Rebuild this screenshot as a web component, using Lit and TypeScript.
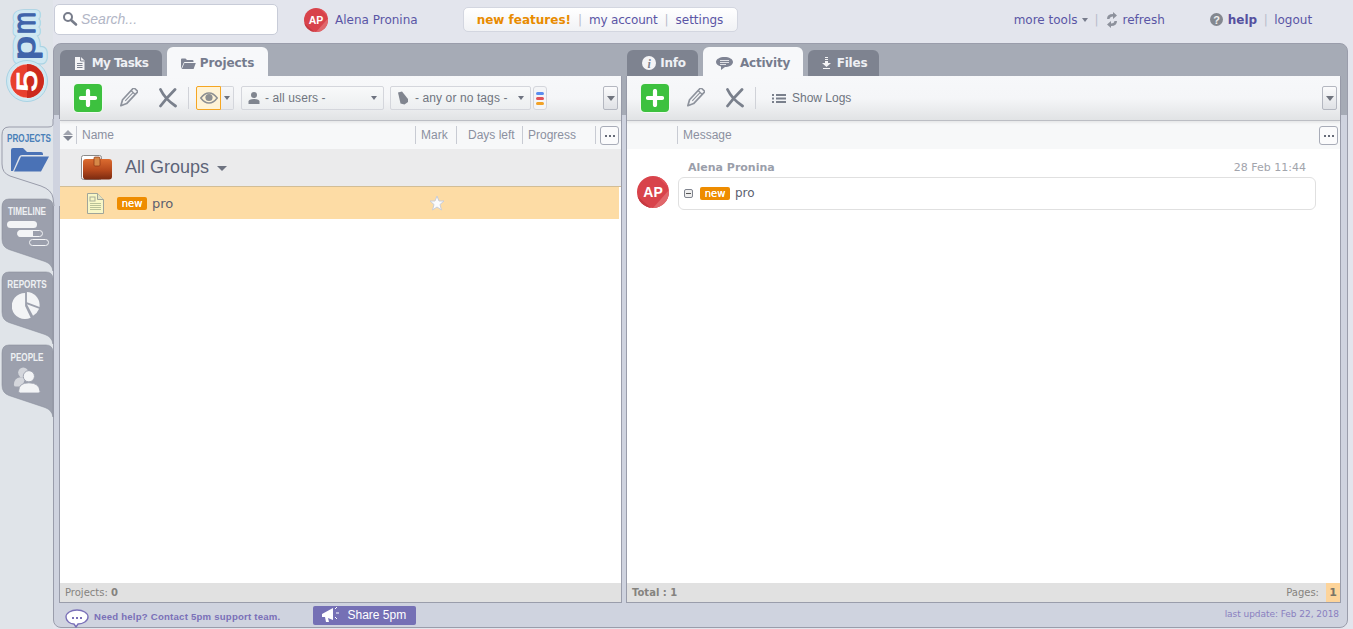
import { LitElement, html, css, svg } from "lit";
import { customElement } from "lit/decorators.js";

const doc = html`<svg width="11" height="13" viewBox="0 0 11 13"><path d="M1 0h6l3.5 3.5V13H1z" fill="#f4f4f6"/><path d="M6.6 0v4h4" fill="none" stroke="#7e8390"/><path d="M3 6.5h5.5M3 8.5h5.5M3 10.5h5.5" stroke="#7e8390"/></svg>`;
const openFolder = (c: string, w = 15, h = 11) => html`<svg width=${w} height=${h} viewBox="0 0 15 11"><path d="M0 11V1.5Q0 .5 1 .5h3.5L6 2h5.5q1 0 1 1v1H4Q3 4 2.6 5z" fill=${c}/><path d="M3.4 5h11.4L12.6 11H.8z" fill=${c}/></svg>`;
const pencil = html`<svg class="pencil" width="20" height="20" viewBox="0 0 20 20"><g transform="rotate(43 10 10)" fill="none" stroke="#8d929c" stroke-width="1.7" stroke-linejoin="round"><path d="M7.2-1.5h5.6V15L10 20.5 7.2 15z"/><path d="M7.2 2.5h5.6" stroke-width="1.4"/><path d="M10 3v11" stroke-width="1.1"/></g></svg>`;
const cross = html`<svg class="cross" width="20" height="20" viewBox="0 0 20 20"><path d="M2.500 1.500Q7 11 17.500 18M17 1.500Q9 9.500 2.500 18" fill="none" stroke="#7a808c" stroke-width="2.800" stroke-linecap="round"/></svg>`;
const plus = html`<div class="plus"><svg width="18" height="18" viewBox="0 0 18 18"><path d="M9 2v14M2 9h14" stroke="#fff" stroke-width="4.2" stroke-linecap="round"/></svg></div>`;
const caret = html`<span class="caret"></span>`;
const avatar = (s: number, fs: number) => html`<svg width=${s} height=${s} viewBox="0 0 32 32" class="avatar"><defs><clipPath id="c"><circle cx="16" cy="16" r="16"/></clipPath></defs><g clip-path="url(#c)"><rect width="32" height="32" fill="#d8434b"/><path d="M16 32L32 14V32z" fill="#e0676b"/><path d="M0 20L14 32H0z" fill="#c63840"/><path d="M20 0H32V12z" fill="#e2555a"/></g><text x="16" y="21" text-anchor="middle" font-family="'Liberation Sans',sans-serif" font-weight="700" font-size=${fs} fill="#fff">AP</text></svg>`;
const more = html`<div class="more"><i></i><i></i><i></i></div>`;
const collapse = html`<div class="collapse"><span></span></div>`;
const badge = html`<span class="badge">new</span>`;

@customElement("app-root")
export class AppRoot extends LitElement {
  static styles = css`
    :host { display: block; height: 629px; overflow: hidden; font-family: "DejaVu Sans", Verdana, sans-serif; background: #e3e5ed; }
    * { box-sizing: border-box; }
    .app { display: flex; height: 629px; }
    .side { width: 53px; flex: none; background: #e0e4e9; position: relative; z-index: 2; display: flex; flex-direction: column; }
    .logo { display: block; height: 126px; flex: none; }
    .stab { display: block; position: relative; width: 60px; height: 73px; flex: none; }
    .stab > svg.shape { position: absolute; left: 0; top: 0; }
    .stab > span { position: relative; display: block; width: 54px; text-align: center; font: 700 11px/12px "Liberation Sans", sans-serif; transform: scaleX(.74); color: #eef0f3; padding-top: 6px; }
    .stab.on > span { color: #4a80b8; padding-top: 6px; }
    .stab > svg.ic { position: relative; display: block; }
    .ic-folder { margin: 3px 0 0 11px; }
    .ic-time { margin: 3px 0 0 6px; }
    .ic-pie { margin: 2px 0 0 12px; }
    .ic-people { margin: 3px 0 0 13px; }
    .main { flex: 1; min-width: 0; display: flex; flex-direction: column; padding-right: 5px; }
    .top { height: 43px; flex: none; display: flex; align-items: center; font-size: 12px; color: #5a55a5; }
    .search { width: 224px; height: 31px; margin: -4px 0 0 1px; background: #fff; border: 1px solid #c8ccd8; border-radius: 5px; display: flex; align-items: center; padding: 0 0 1px 7px; gap: 3px; font: italic 14px "Liberation Sans", sans-serif; color: #b2b6c6; }
    .me { display: flex; align-items: center; gap: 7px; margin: -3px 0 0 26px; }
    .avatar { display: block; flex: none; }
    .pill { margin: -4px 0 0 45px; width: 275px; height: 25px; display: flex; align-items: center; padding-left: 13px; background: linear-gradient(#fff, #f1f2f5); border: 1px solid #d3d6e0; border-radius: 5px; }
    .pill b { color: #e88b00; }
    .pill .acc { letter-spacing: -.2px; }
    .bar { color: #b8bccb; margin: 0 7px; }
    .tools { margin: -4px 0 0 276px; display: flex; align-items: center; }
    .tools .dn { width: 0; height: 0; border: 3.5px solid transparent; border-top: 4px solid #777c8c; border-bottom: 0; margin-left: 4px; }
    .tools .bar { margin: 0 5px 0 7px; }
    .tools svg { margin-right: 5px; margin-left: 2px; }
    .help { margin: -4px 0 0 45px; display: flex; align-items: center; }
    .help svg { margin-right: 5px; }
    .help b { color: #55509f; }
    .help .bar { margin: 0 6.500px; }
    .panel { flex: 1; min-height: 0; margin-bottom: 1px; border: 1px solid #9a9dab; border-radius: 8px; background: linear-gradient(#a6abb6 0 71px, #cfd3df 71px); display: flex; flex-direction: column; padding: 0 6px 0 5px; }
    .panes { flex: 1; min-height: 0; display: flex; gap: 4px; }
    .pane { display: flex; flex-direction: column; min-width: 0; }
    .pane.l { width: 563px; flex: none; }
    .pane.r { flex: 1; }
    .tabs { height: 32px; flex: none; display: flex; align-items: flex-end; gap: 5px; padding-left: 1px; position: relative; }
    .tab { height: 26px; border-radius: 6px 6px 0 0; background: #7e8390; color: #eef0f4; display: flex; align-items: center; justify-content: center; gap: 6px; font-weight: 700; font-size: 12px; letter-spacing: -.2px; }
    .tab.on { height: 30px; background: #f7f8fa; color: #767c8e; margin-bottom: -1px; position: relative; z-index: 1; padding-top: 2px; }
    .t-mytasks { width: 102px; gap: 7px; letter-spacing: -.55px; } .t-projects { width: 101px; gap: 4px; letter-spacing: -.1px; }
    .t-info { width: 71px; padding-left: 3px; gap: 4px; } .t-activity { width: 100px; gap: 7px; } .t-files { width: 71px; padding-left: 2px; }
    .body { flex: 1; min-height: 0; display: flex; flex-direction: column; background: #fff; border: 1px solid #9a9dab; border-top: 0; }
    .bar-t { height: 45px; flex: none; display: flex; align-items: center; padding-left: 14px; background: linear-gradient(#f7f8fa 0, #f5f6f8 50%, #e1e3e5 100%); border-bottom: 1px solid #bcbec4; box-shadow: 0 2px 2px rgba(0,0,0,.06); position: relative; }
    .plus { width: 28px; height: 28px; border-radius: 4px; background: #3dc13f; display: flex; align-items: center; justify-content: center; box-shadow: 0 0 0 1px #f2fbf2; flex: none; }
    .pencil { margin-left: 16px; flex: none; } .cross { margin-left: 20px; flex: none; }
    .sep { width: 1px; height: 22px; background: #d0d2d8; margin-left: 10px; flex: none; }
    .eye { display: flex; height: 24px; margin-left: 7px; flex: none; }
    .eye .a { width: 25px; border: 1px solid #f5a623; background: #fff3d6; display: flex; align-items: center; justify-content: center; border-radius: 2px 0 0 2px; }
    .eye .b { width: 13px; border: 1px solid #d4d6dc; border-left: 0; background: linear-gradient(#f6f7f9, #e9eaed); display: flex; align-items: center; justify-content: center; border-radius: 0 2px 2px 0; }
    .caret { display: inline-block; width: 0; height: 0; border: 3.5px solid transparent; border-top: 4px solid #6e7380; border-bottom: 0; flex: none; }
    .sel { height: 24px; flex: none; border: 1px solid #d4d6dc; border-radius: 2px; background: linear-gradient(#f8f9fa, #eceef0); display: flex; align-items: center; font: 12px "Liberation Sans", sans-serif; color: #70757f; letter-spacing: .1px; }
    .sel .caret { margin-left: auto; margin-right: 6px; }
    .s-users { width: 143px; margin-left: 7px; padding-left: 6px; gap: 5px; }
    .s-tags { width: 141px; margin-left: 6px; padding-left: 6px; gap: 6px; }
    .chip { width: 14px; height: 24px; margin-left: 2px; flex: none; border: 1px solid #d4d6dc; border-radius: 3px; background: #f4f5f7; display: flex; flex-direction: column; justify-content: center; gap: 2px; padding: 0 2px; }
    .chip i { display: block; height: 3px; border-radius: 2px; }
    .chip .c1 { background: #5b8def; } .chip .c2 { background: #e0525a; } .chip .c3 { background: #f2a227; }
    .collapse { margin-left: auto; margin-right: 3px; width: 15px; height: 24px; flex: none; border: 1px solid #b4b7c0; border-radius: 2px; background: linear-gradient(#fbfbfc, #dfe1e5); display: flex; align-items: center; justify-content: center; }
    .collapse span { width: 0; height: 0; border: 4.5px solid transparent; border-top: 5px solid #70747e; border-bottom: 0; }
    .logs { display: flex; align-items: center; gap: 6px; margin-left: 16px; font: 12px "Liberation Sans", sans-serif; color: #6e7480; }
    .cols { height: 28px; flex: none; display: flex; align-items: center; background: #f7f8f9; font: 12px "Liberation Sans", sans-serif; color: #8b90a0; }
    .cols > div { height: 18px; line-height: 18px; border-left: 1px solid #c8cbd3; padding-left: 5px; flex: none; }
    .cols > .sort { border: 0; padding: 0 0 0 3px; width: 16px; display: flex; flex-direction: column; justify-content: center; gap: 1px; }
    .sort i { display: block; width: 0; height: 0; border: 5.5px solid transparent; border-bottom: 0; border-top: 5px solid #7e8390; }
    .sort i:first-child { border-top: 0; border-bottom: 5px solid #a0a4ae; }
    .cols > .slot { border: 0; padding: 0; width: 50px; }
    .cols > .grow { flex: 1; min-width: 0; }
    .c-mark { width: 41px; } .c-days { width: 66px; padding-left: 11px !important; } .c-prog { width: 73px; }
    .c-end { width: 26px; padding-left: 4px !important; position: relative; }
    .c-end2 { border: 0 !important; width: 21px; padding-left: 0 !important; }
    .more { width: 19px; height: 19px; border: 1px solid #a8acb8; border-radius: 3px; background: #fbfbfc; display: flex; align-items: center; justify-content: center; gap: 2px; }
    .more i { width: 2px; height: 2px; background: #666b78; display: block; }
    .content { flex: 1; min-height: 0; background: #fff; }
    .groups { height: 38px; background: #ebebec; border-bottom: 1px solid #d2bd95; display: flex; align-items: center; padding-left: 21px; font: 18px "Liberation Sans", sans-serif; color: #5d6478; }
    .groups svg { margin-right: 13px; }
    .groups .caret { border-width: 5px 5px 0; border-top-color: #6e7380; margin-left: 8px; margin-top: 2px; border-bottom: 0; }
    .row { height: 32px; margin-right: 2px; background: #fddca5; display: flex; align-items: center; padding-left: 27px; font-size: 13px; color: #5c6070; position: relative; }
    .row svg.d { margin-right: 13px; }
    .row svg.star { margin-left: 256px; margin-top: -1px; }
    .badge { display: inline-block; width: 30px; height: 13px; border-radius: 2px; background: #ee8c00; color: #fff; font: 400 10px/13px "DejaVu Sans", sans-serif; text-shadow: 0 0 .5px #fff; text-align: center; margin-right: 5px; }
    .foot { height: 19px; flex: none; background: #e1e1e1; display: flex; align-items: center; padding: 0 0 0 5px; font-size: 10px; color: #85837f; }
    .foot b { font-weight: 700; }
    .foot .pg { margin-left: auto; display: flex; align-items: center; height: 19px; }
    .foot .n { width: 14px; height: 19px; margin-left: 7px; background: #fdd49a; text-align: center; line-height: 19px; font-weight: 700; font-size: 11px; color: #7a7468; }
    .msg { padding: 12px 24px 0 10px; }
    .msg .h { display: flex; justify-content: space-between; padding: 0 10px 0 51px; font-size: 11px; line-height: 14px; color: #9a9eaa; }
    .msg .h span { color: #a2a4ac; }
    .msg .b { display: flex; align-items: flex-start; gap: 9px; margin-top: 2px; }
    .msg .b .avatar { margin-top: -1px; }
    .msg .box { flex: 1; height: 33px; border: 1px solid #e0e0e0; border-radius: 6px; display: flex; align-items: center; padding-left: 5px; font-size: 12px; color: #5c6070; padding-bottom: 1px; }
    .msg .mini { width: 9px; height: 9px; border: 1px solid #80848e; border-radius: 2px; background: #eee; position: relative; margin-right: 7px; flex: none; }
    .msg .mini::after { content: ""; position: absolute; left: 1px; right: 1px; top: 3px; height: 1px; background: #555; }
    .pfoot { height: 24px; flex: none; display: flex; align-items: center; padding-left: 6px; font: 700 9.6px "Liberation Sans", sans-serif; color: #7a70b8; letter-spacing: .22px; }
    .pfoot > svg { margin: 6px 5px 0 0; flex: none; }
    .pfoot .need { margin-top: 3px; }
    .share { margin-left: 32px; width: 103px; height: 19px; border-radius: 2px; background: #7570b5; color: #fff; font: 12px "Liberation Sans", sans-serif; display: flex; align-items: center; padding-left: 9px; gap: 6px; letter-spacing: 0; }
    .last { margin-left: auto; margin-right: 2px; font: 9px "DejaVu Sans", sans-serif; color: #8a80c0; font-weight: 400; letter-spacing: -.05px; padding-bottom: 3px; }
  `;

  private tabShape(on: boolean) {
    const d = on
      ? "M53 -7 V-2 Q53 1 48 1 H9 Q2 1 2 9 V38 Q2 47 10 50 L41 60 Q52 64 53 72 L54 80"
      : "M2 8 Q2 0 9 0 H46 Q52 0 53 6 V72 Q52 65 45 62.500 L9 50.500 Q2 48 2 40 Z";
    return html`<svg class="shape" width="60" height="82" viewBox="0 0 60 82" overflow="visible">
      ${on
        ? svg`<path d="M53 -7 V-2 Q53 1 48 1 H9 Q2 1 2 9 V38 Q2 47 10 50 L41 60 Q52 64 53 72 L54 80 H60 V-7 Z" fill="#cfd3df"/><path d=${d + " H53 V-7 Z"} fill="#e0e4e9"/><path d=${d} fill="none" stroke="#9a9dab"/>`
        : svg`<path d=${d} fill="#9ca0ad" stroke="#8a8e9c" stroke-width=".6"/>`}
    </svg>`;
  }

  render() {
    return html`<div class="app">
      <div class="side">
        <svg class="logo" width="53" height="126" viewBox="0 0 53 126">
          <g font-family="'Liberation Sans',sans-serif" font-weight="400" font-size="32" stroke-linejoin="round">
            <text transform="translate(35 60) rotate(-90)" textLength="24" lengthAdjust="spacingAndGlyphs" fill="#cfe8f2" stroke="#a9d3e4" stroke-width="11">p</text>
            <text transform="translate(35 34) rotate(-90)" textLength="22" lengthAdjust="spacingAndGlyphs" fill="#cfe8f2" stroke="#a9d3e4" stroke-width="11">m</text>
            <text transform="translate(35 60) rotate(-90)" textLength="24" lengthAdjust="spacingAndGlyphs" fill="#cfe8f2" stroke="#cfe8f2" stroke-width="9">p</text>
            <text transform="translate(35 34) rotate(-90)" textLength="22" lengthAdjust="spacingAndGlyphs" fill="#cfe8f2" stroke="#cfe8f2" stroke-width="9">m</text>
            <text transform="translate(35 60) rotate(-90)" textLength="24" lengthAdjust="spacingAndGlyphs" fill="#3f64aa" stroke="#3f64aa" stroke-width="1.200">p</text>
            <text transform="translate(35 34) rotate(-90)" textLength="22" lengthAdjust="spacingAndGlyphs" fill="#3f64aa" stroke="#3f64aa" stroke-width="1.200">m</text>
          </g>
          <circle cx="27" cy="81" r="20.500" fill="#cfe8f2" stroke="#a9d3e4"/>
          <circle cx="27" cy="81" r="17" fill="#e8402f" stroke="#fff" stroke-width=".6"/>
          <path d="M27 64a17 17 0 0 1 0 34z" fill="#cc2a1e"/>
          <text transform="translate(37 92) rotate(-90)" textLength="22" lengthAdjust="spacingAndGlyphs" font-family="'Liberation Sans',sans-serif" font-weight="400" font-size="30" fill="#fff" stroke="#fff" stroke-width=".8">5</text>
        </svg>
        <div class="stab on">${this.tabShape(true)}<span>PROJECTS</span>
          <svg class="ic ic-folder" width="38" height="25" viewBox="0 0 38 25"><path d="M0 24V3Q0 1 2 1H12L16 5H30Q32 5 32 7V8H11Q9 8 8 10L2 24z" fill="#4a72b6"/><path d="M10 9.500H38L30 24.500H3z" fill="#4a72b6"/></svg>
        </div>
        <div class="stab">${this.tabShape(false)}<span>TIMELINE</span>
          <svg class="ic ic-time" width="46" height="27" viewBox="0 0 46 27"><rect x="1" y="1" width="30" height="7" rx="3.500" fill="#f3f4f6"/><rect x="11.500" y="10.500" width="25" height="6" rx="3" fill="#9ca0ad" stroke="#f3f4f6"/><path d="M15 10h12v7H15a3.500 3.500 0 0 1 0-7z" fill="#f3f4f6"/><rect x="23.500" y="19.500" width="19" height="6" rx="3" fill="none" stroke="#f3f4f6"/></svg>
        </div>
        <div class="stab">${this.tabShape(false)}<span>REPORTS</span>
          <svg class="ic ic-pie" width="29" height="28" viewBox="0 0 30 30"><path d="M13.500 1A14 14 0 1 0 19.500 27.500L13.500 15z" fill="#f3f4f6"/><path d="M15.500 0A14 14 0 0 1 29 13.500V16L15.500 11z" fill="#f3f4f6"/><path d="M15.500 13L28.500 18Q26.500 23 22 25.500z" fill="#f3f4f6"/></svg>
        </div>
        <div class="stab">${this.tabShape(false)}<span>PEOPLE</span>
          <svg class="ic ic-people" width="28" height="28" viewBox="0 0 30 30"><circle cx="11" cy="7" r="5.500" fill="#d4d6dc"/><path d="M1 20q0-7 7-8l5 1-3 9H3q-2 0-2-2z" fill="#d4d6dc"/><circle cx="17" cy="11" r="6" fill="#f3f4f6" stroke="#9ca0ad"/><path d="M6 27q0-9 11-9t12 9q0 2-2 2H8q-2 0-2-2z" fill="#f3f4f6" stroke="#9ca0ad"/></svg>
        </div>
      </div>
      <div class="main">
        <div class="top">
          <div class="search"><svg width="16" height="16" viewBox="0 0 16 16"><circle cx="6" cy="6" r="4" fill="none" stroke="#777c8a" stroke-width="2"/><path d="M9 9l5 4.500" stroke="#777c8a" stroke-width="2.600" stroke-linecap="round"/></svg>Search...</div>
          <div class="me">${avatar(24, 14)}<span>Alena Pronina</span></div>
          <div class="pill"><b>new features!</b><span class="bar">|</span><span class="acc">my account</span><span class="bar">|</span><span>settings</span></div>
          <div class="tools"><span>more tools</span><span class="dn"></span><span class="bar">|</span>
            <svg width="12" height="16" viewBox="0 0 12 16"><path d="M1 7Q1 2 7 2V0l4 3.500L7 7V4.500Q4 4.500 3.500 7zM11 9q0 5-6 5v2l-4-3.500L5 9v2.500q3 0 3.500-2.500z" fill="#8d919c"/></svg><span>refresh</span></div>
          <div class="help"><svg width="13" height="13" viewBox="0 0 13 13"><circle cx="6.500" cy="6.500" r="6.500" fill="#83878f"/><text x="6.500" y="10.500" text-anchor="middle" font-family="'Liberation Sans',sans-serif" font-weight="700" font-size="11" fill="#eee">?</text></svg><b>help</b><span class="bar">|</span><span>logout</span></div>
        </div>
        <div class="panel">
          <div class="panes">
            <div class="pane l">
              <div class="tabs">
                <div class="tab t-mytasks">${doc}<span>My Tasks</span></div>
                <div class="tab on t-projects">${openFolder("#7f8494")}<span>Projects</span></div>
              </div>
              <div class="body">
                <div class="bar-t">${plus}${pencil}${cross}<span class="sep"></span>
                  <div class="eye"><div class="a"><svg width="18" height="12" viewBox="0 0 18 12"><path d="M.8 6Q4.500 1 9 1t8.200 5Q13.500 11 9 11T.8 6z" fill="none" stroke="#8d8f92" stroke-width="1.500"/><circle cx="9" cy="5.500" r="3.600" fill="#8d8f92"/></svg></div><div class="b">${caret}</div></div>
                  <div class="sel s-users"><svg width="12" height="12" viewBox="0 0 12 12"><circle cx="6" cy="3" r="3" fill="#80858f"/><path d="M.5 12V9.500Q.5 7 6 7t5.500 2.500V12z" fill="#80858f"/></svg><span>- all users -</span>${caret}</div>
                  <div class="sel s-tags"><svg width="12" height="14" viewBox="0 0 12 14"><path d="M1 1.500L5 0.500 11 8V11L7.500 13.500 3.500 12.500z" fill="#80858f"/></svg><span>- any or no tags -</span>${caret}</div>
                  <div class="chip"><i class="c1"></i><i class="c2"></i><i class="c3"></i></div>
                  ${collapse}
                </div>
                <div class="cols">
                  <div class="sort"><i></i><i></i></div>
                  <div class="grow">Name</div><div class="c-mark">Mark</div><div class="c-days">Days left</div><div class="c-prog">Progress</div><div class="c-end">${more}</div>
                </div>
                <div class="content">
                  <div class="groups"><svg width="31" height="25" viewBox="0 0 31 25"><defs><linearGradient id="bag" x1="0" y1="0" x2="0" y2="1"><stop offset="0" stop-color="#dc6c30"/><stop offset=".55" stop-color="#b5481c"/><stop offset="1" stop-color="#7a2a10"/></linearGradient></defs><rect x=".5" y=".5" width="20" height="24" rx="2" fill="#fff" stroke="#8a8a8a"/><rect x="2" y="4" width="29" height="20.500" rx="3" fill="url(#bag)"/><rect x="13" y="2" width="6" height="9" rx="1" fill="#d68848" stroke="#8a3212" stroke-width=".7"/></svg>All Groups<span class="caret"></span></div>
                  <div class="row">
                    <svg class="d" width="17" height="21" viewBox="0 0 17 21"><path d="M.5.500h10l6 6v14H.5z" fill="#f8f7c6" stroke="#a0a59a"/><path d="M10.500.500v6h6" fill="#e4e3c0" stroke="#a0a59a"/><rect x="3" y="4" width="5" height="4" fill="none" stroke="#a8ad98"/><path d="M3 10.500h11M3 12.500h11M3 14.500h11M3 16.500h11" stroke="#b8c098"/></svg>
                    ${badge}<span>pro</span>
                    <svg class="star" width="16" height="16" viewBox="0 0 16 16"><path d="M8 1l2 5h5l-4 3.500L12.500 15 8 12l-4.500 3L5 9.500 1 6h5z" fill="#fbfbfd" stroke="#c9cdd8"/></svg>
                  </div>
                </div>
                <div class="foot"><span>Projects:&nbsp;<b>0</b></span></div>
              </div>
            </div>
            <div class="pane r">
              <div class="tabs">
                <div class="tab t-info"><svg width="14" height="14" viewBox="0 0 14 14"><circle cx="7" cy="7" r="7" fill="#f4f4f6"/><text x="7" y="11.500" text-anchor="middle" font-family="'Liberation Serif',serif" font-style="italic" font-weight="700" font-size="12" fill="#7e8390">i</text></svg><span>Info</span></div>
                <div class="tab on t-activity"><svg width="17" height="13" viewBox="0 0 17 13"><path d="M8.500 0C13 0 17 2 17 5s-4 5-8 5L5 13V9.500C2 9 0 7 0 5c0-3 4-5 8.500-5z" fill="#7f8494"/><path d="M4 3.500h9M4 5.500h9M4 7.500h6" stroke="#f7f8fa" stroke-width=".8"/></svg><span>Activity</span></div>
                <div class="tab t-files"><svg width="9" height="12" viewBox="0 0 9 12"><path d="M3 0h3v1H3zM3 2h3v1H3zM3 4h3v2h3L4.500 10 0 6h3zM1 11h7v1H1z" fill="#f4f4f6"/></svg><span>Files</span></div>
              </div>
              <div class="body">
                <div class="bar-t">${plus}${pencil}${cross}<span class="sep"></span>
                  <div class="logs"><svg width="14" height="11" viewBox="0 0 14 11"><path d="M0 1h2v2H0zM0 4.500h2v2H0zM0 8h2v2H0zM4 1h10v2H4zM4 4.500h10v2H4zM4 8h10v2H4z" fill="#7a808c"/></svg><span>Show Logs</span></div>
                  ${collapse}
                </div>
                <div class="cols"><div class="slot"></div><div class="grow">Message</div><div class="c-end2">${more}</div></div>
                <div class="content msg">
                  <div class="h"><b>Alena Pronina</b><span>28 Feb 11:44</span></div>
                  <div class="b">${avatar(32, 14)}<div class="box"><i class="mini"></i>${badge}<span>pro</span></div></div>
                </div>
                <div class="foot"><b>Total : 1</b><div class="pg"><span>Pages:</span><span class="n">1</span></div></div>
              </div>
            </div>
          </div>
          <div class="pfoot">
            <svg width="24" height="19" viewBox="0 0 24 19"><path d="M12 1c6 0 11 3 11 7s-5 7-10 7l-2 3-2-3C5 15 1 12 1 8s5-7 11-7z" fill="#fff" stroke="#7a70b8" stroke-width="1.400"/><path d="M7 8h2v2H7zM11 8h2v2h-2zM15 8h2v2h-2z" fill="#7a70b8"/></svg>
            <span class="need">Need help? Contact 5pm support team.</span>
            <div class="share"><svg width="20" height="16" viewBox="0 0 20 16"><path d="M0 7l11-6v12L6 11l1 4H4L3 10H0z" fill="#fff"/><path d="M13 2l2-2M14 6h3M13 10l2 2" stroke="#fff" stroke-width="1"/></svg><span>Share 5pm</span></div>
            <span class="last">last update: Feb 22, 2018</span>
          </div>
        </div>
      </div>
    </div>`;
  }
}
